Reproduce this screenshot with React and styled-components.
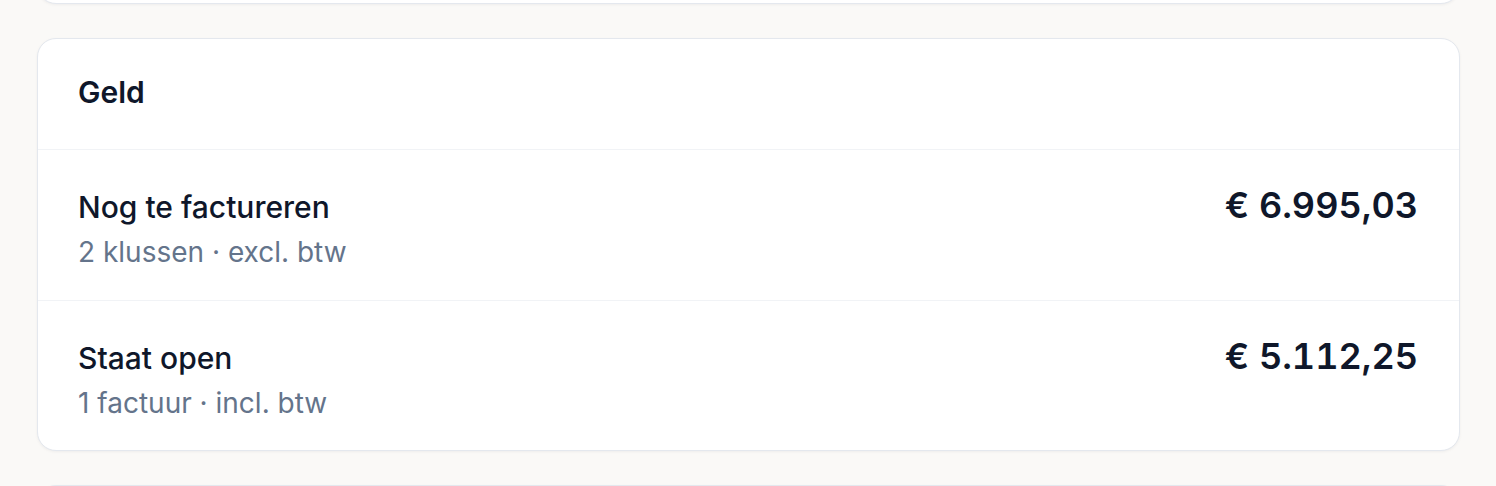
import React from "react";
import styled, { createGlobalStyle } from "styled-components";

const GlobalStyle = createGlobalStyle`
  html, body {
    margin: 0;
    padding: 0;
    background: #faf9f7;
    font-family: Inter, "Noto Sans", "Liberation Sans", sans-serif;
    color: #0f172a;
    -webkit-font-smoothing: antialiased;
  }
`;

const Page = styled.div`
  height: 486px;
  overflow: hidden;
  padding: 0 36px 0 37px;
`;

const Stack = styled.div`
  display: flex;
  flex-direction: column;
  gap: 34px;
  margin-top: -98px;
`;

const Card = styled.section`
  background: #fff;
  border: 1.5px solid #e4e8ee;
  border-radius: 19px;
  box-shadow: 0 1px 3px rgba(15, 23, 42, 0.05);
  min-height: ${(p) => p.$minHeight || 0}px;
  overflow: hidden;
`;

const Header = styled.header`
  height: 110.5px;
  box-sizing: border-box;
  padding: 0 40px 4px;
  display: flex;
  align-items: center;
  border-bottom: 1.5px solid #f1f3f6;
`;

const Title = styled.h2`
  margin: 0;
  font-size: 30px;
  font-weight: 600;
  color: #0f172a;
`;

const Row = styled.div`
  height: 150px;
  box-sizing: border-box;
  padding: 37px 41px 0 40px;
  display: flex;
  justify-content: space-between;
  align-items: flex-start;
  & + & {
    border-top: 1.5px solid #f1f3f6;
  }
`;

const Label = styled.div`
  font-size: 30px;
  line-height: 40px;
  font-weight: 500;
  color: #0f172a;
`;

const Meta = styled.div`
  font-size: 28px;
  line-height: 34px;
  color: #64748b;
  margin-top: 8px;
`;

const Amount = styled.div`
  font-size: 36px;
  line-height: 36px;
  font-weight: 600;
  font-variant-numeric: tabular-nums;
  color: #0f172a;
  white-space: nowrap;
`;

const rows = [
  { label: "Nog te factureren", meta: "2 klussen · excl. btw", amount: "€ 6.995,03" },
  { label: "Staat open", meta: "1 factuur · incl. btw", amount: "€ 5.112,25" },
];

export default function App() {
  return (
    <>
      <GlobalStyle />
      <Page>
        <Stack>
          <Card $minHeight={100} />
          <Card>
            <Header>
              <Title>Geld</Title>
            </Header>
            {rows.map((r) => (
              <Row key={r.label}>
                <div>
                  <Label>{r.label}</Label>
                  <Meta>{r.meta}</Meta>
                </div>
                <Amount>{r.amount}</Amount>
              </Row>
            ))}
          </Card>
          <Card $minHeight={200} />
        </Stack>
      </Page>
    </>
  );
}
